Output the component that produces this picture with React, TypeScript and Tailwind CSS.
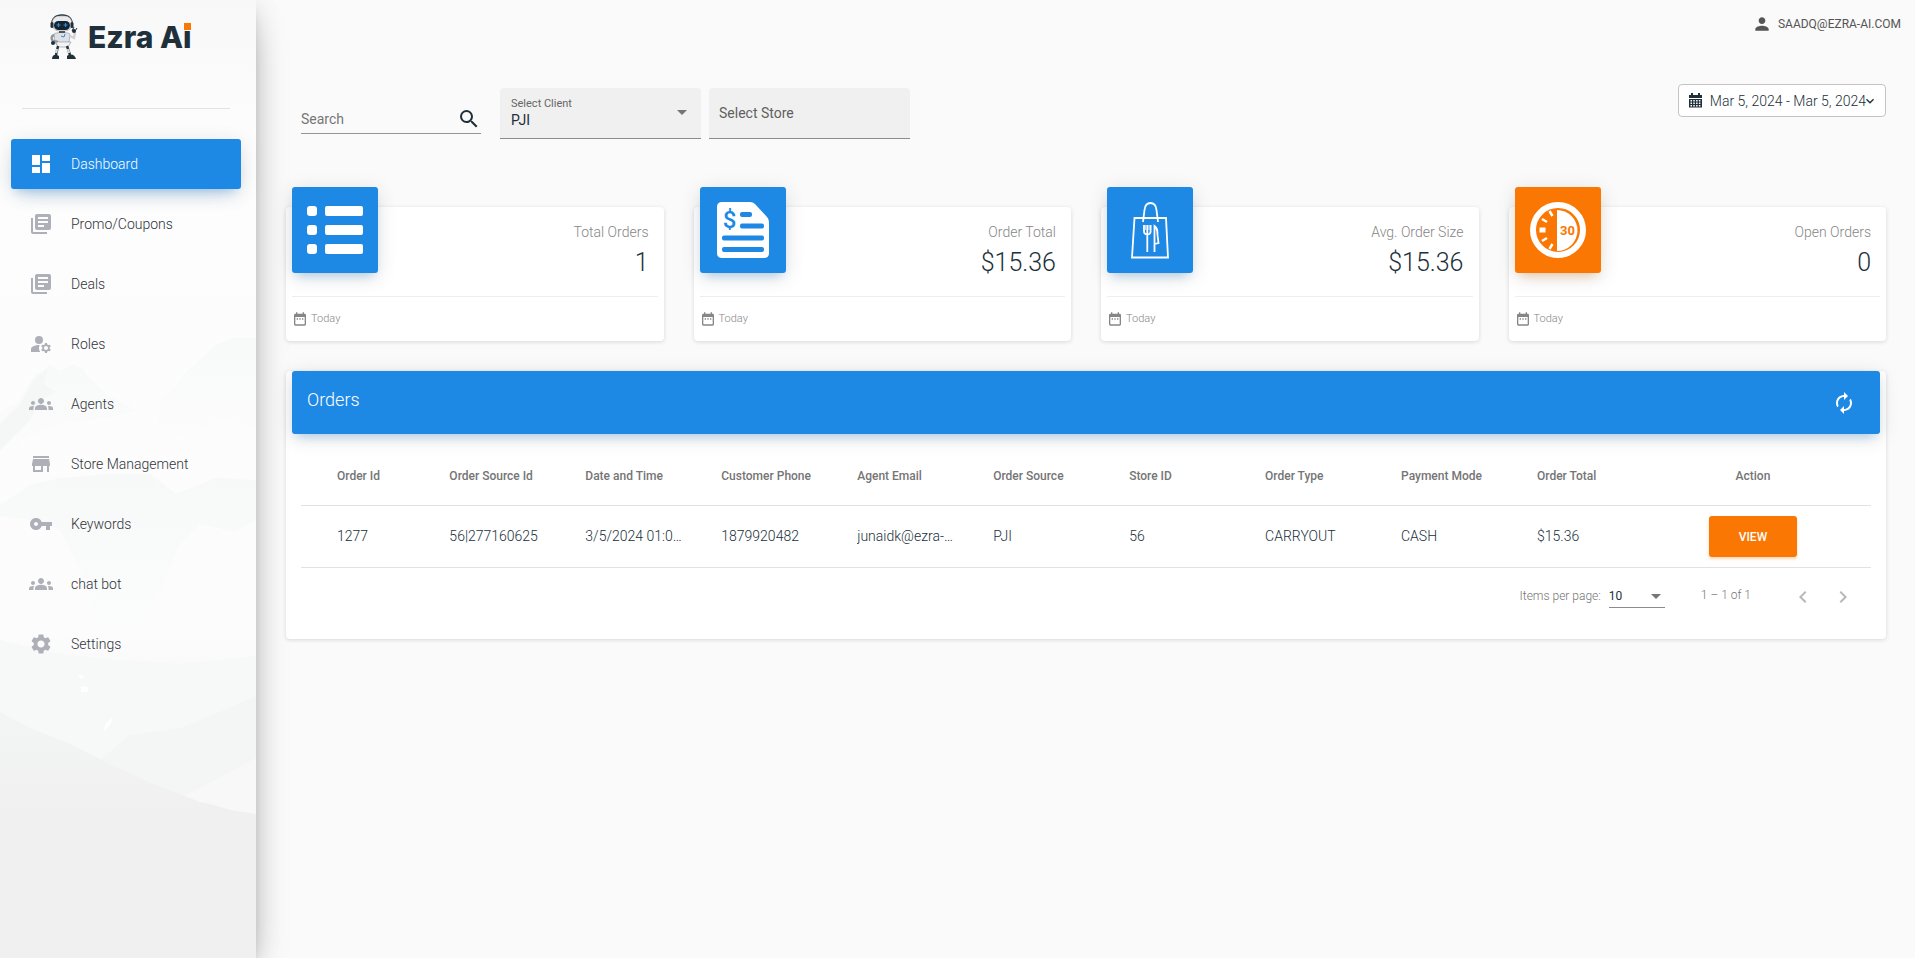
import { useState } from 'react';
import type { ReactNode } from 'react';
import type { IconType } from 'react-icons';
import {
  MdArrowDropDown,
  MdAutorenew,
  MdChevronLeft,
  MdChevronRight,
  MdDashboard,
  MdDateRange,
  MdGroups,
  MdKeyboardArrowDown,
  MdLibraryBooks,
  MdManageAccounts,
  MdPerson,
  MdSearch,
  MdSettings,
  MdStore,
  MdVpnKey,
} from 'react-icons/md';

const navItems: { label: string; icon: IconType; active?: boolean }[] = [
  { label: 'Dashboard', icon: MdDashboard, active: true },
  { label: 'Promo/Coupons', icon: MdLibraryBooks },
  { label: 'Deals', icon: MdLibraryBooks },
  { label: 'Roles', icon: MdManageAccounts },
  { label: 'Agents', icon: MdGroups },
  { label: 'Store Management', icon: MdStore },
  { label: 'Keywords', icon: MdVpnKey },
  { label: 'chat bot', icon: MdGroups },
  { label: 'Settings', icon: MdSettings },
];

const columns = [
  'Order Id',
  'Order Source Id',
  'Date and Time',
  'Customer Phone',
  'Agent Email',
  'Order Source',
  'Store ID',
  'Order Type',
  'Payment Mode',
  'Order Total',
];

const orders = [
  ['1277', '56|277160625', '3/5/2024 01:08 PM', '1879920482', 'junaidk@ezra-ai.com', 'PJI', '56', 'CARRYOUT', 'CASH', '$15.36'],
];

function RobotLogo() {
  return (
    <svg width="28" height="46" viewBox="0 0 28 46" fill="none" aria-hidden="true">
      <path d="M2 12C1 4 6 1 12 1s11 3 10 11" stroke="#20303a" strokeWidth="1.5" />
      <rect x="2" y="2" width="20" height="15" rx="7" fill="#e9eaec" stroke="#8b9197" strokeWidth="0.5" />
      <rect x="4" y="7" width="16" height="9" rx="4.5" fill="#17242d" />
      <rect x="0.5" y="8" width="3" height="6" rx="1.5" fill="#20303a" />
      <rect x="20.5" y="8" width="3" height="6" rx="1.5" fill="#20303a" />
      <path d="M6.5 11h4M8.5 9v4M13.5 11h4M15.5 9v4" stroke="#2b8be8" strokeWidth="1.2" />
      <path d="M4 20c2-2 14-2 16 0l-1 9c-2 4-12 4-14 0z" fill="#dfe1e4" stroke="#8b9197" strokeWidth="0.6" />
      <path d="M9 17h6v2H9z" fill="#4a555d" />
      <path d="M4 21c-3 1-3 4-1 6l5 1" stroke="#8f959b" strokeWidth="2.4" />
      <path d="M20 22l4 2 1-6" stroke="#cfd2d6" strokeWidth="2.4" />
      <path d="M22 17l2-4M25 17l2-3" stroke="#20303a" strokeWidth="1" />
      <circle cx="24" cy="17" r="2" fill="#20303a" />
      <circle cx="3" cy="29" r="2" fill="#20303a" />
      <path d="M11 22l3 1 1-3" stroke="#2b8be8" strokeWidth="1" />
      <path d="M6 28h15l-3 5H8z" fill="#f4f4f5" stroke="#8b9197" strokeWidth="0.6" />
      <path d="M8 32l-2 9M17 32l3 9" stroke="#20303a" strokeWidth="2.4" />
      <path d="M7 35l-1 4M18 35l1 4" stroke="#d8dadd" strokeWidth="2.4" />
      <path d="M2 45c0-3 2-5 5-4l2 1v3zM17 45v-3c4-3 8-1 9 3z" fill="#20303a" />
    </svg>
  );
}

function Mountains() {
  return (
    <svg className="h-full w-full" viewBox="0 0 256 958" preserveAspectRatio="none" aria-hidden="true">
      <defs>
        <linearGradient id="sky" x1="0" y1="0" x2="0" y2="1">
          <stop offset="0" stopColor="#f8f8f8" />
          <stop offset="0.16" stopColor="#fdfdfd" />
          <stop offset="0.66" stopColor="#fcfcfc" />
          <stop offset="0.76" stopColor="#f5f6f6" />
          <stop offset="1" stopColor="#f0f0f0" />
        </linearGradient>
        <linearGradient id="ridge" x1="0" y1="0" x2="0" y2="1">
          <stop offset="0" stopColor="#f8f9f9" />
          <stop offset="1" stopColor="#fcfcfc" />
        </linearGradient>
        <linearGradient id="slope" x1="0" y1="0" x2="0" y2="1">
          <stop offset="0" stopColor="#f7f8f8" />
          <stop offset="1" stopColor="#fbfcfc" />
        </linearGradient>
        <linearGradient id="forest" x1="0" y1="0" x2="0" y2="1">
          <stop offset="0" stopColor="#f3f5f4" />
          <stop offset="0.4" stopColor="#f0f0f0" />
        </linearGradient>
      </defs>
      <rect width="256" height="958" fill="url(#sky)" />
      <path d="M0 412L18 402L26 388L35 375L42 371L50 365L60 371L74 364L84 370L90 379L104 392L120 402L136 410L120 416L60 424L30 436L0 456Z" fill="url(#ridge)" />
      <path d="M20 404L34 380L48 368L44 384L56 392L40 400L30 420L14 436L0 450V424Z" fill="#f5f6f6" />
      <path d="M160 402L174 388L188 370L204 356L215 345L232 338H256V432L240 424L220 420L190 434L160 440L158 424Z" fill="url(#ridge)" />
      <path d="M0 505L30 485L60 478L106 474L150 474L176 494L216 478L256 480V520L236 532L200 524L180 544L160 590L146 620L100 624L80 570L60 530L30 520L0 516Z" fill="url(#slope)" />
      <path d="M0 640L60 654L120 660L180 664L256 656V813H0Z" fill="#f7f8f8" />
      <path d="M100 760L130 735L180 728L220 712L256 696V760L185 796Z" fill="#f4f6f5" />
      <path d="M0 712L30 728L66 742L110 764L150 782L200 802L256 812V958H0Z" fill="url(#forest)" />
      <path d="M185 796L256 758V814L230 810Z" fill="#f8f8f8" />
      <path d="M78 675l7 1-4 3zM81 686l8 1-2 5h-6zM103 732l3-9 7-6-3 8z" fill="#fff" />
    </svg>
  );
}

function ListIcon() {
  return (
    <svg width="86" height="86" viewBox="0 0 86 86" fill="#fff" aria-hidden="true">
      <rect x="15" y="19" width="10" height="10" rx="3" />
      <rect x="33" y="19" width="38" height="10" rx="2" />
      <rect x="15" y="38" width="10" height="10" rx="3" />
      <rect x="33" y="38" width="38" height="10" rx="2" />
      <rect x="15" y="57" width="10" height="10" rx="3" />
      <rect x="33" y="57" width="38" height="10" rx="2" />
    </svg>
  );
}

function InvoiceIcon() {
  return (
    <svg width="86" height="86" viewBox="0 0 86 86" aria-hidden="true">
      <path d="M22 15h28q3 0 5 2l12 13q2 2 2 5v31q0 5-5 5H22q-5 0-5-5V20q0-5 5-5z" fill="#fff" />
      <g fill="#1e88e5">
        <rect x="40" y="25" width="12" height="5" rx="2" />
        <rect x="40" y="36.5" width="24" height="5" rx="2" />
        <rect x="22" y="48.5" width="42" height="5" rx="2" />
        <rect x="22" y="60" width="42" height="5" rx="2" />
        <text x="29.5" y="41" textAnchor="middle" fontFamily="Roboto, sans-serif" fontWeight="500" fontSize="24">$</text>
      </g>
    </svg>
  );
}

function BagIcon() {
  return (
    <svg width="86" height="86" viewBox="0 0 86 86" fill="none" stroke="#fff" strokeWidth="1.8" aria-hidden="true">
      <path d="M27.5 31H59l2 39.5H25z" />
      <path d="M36 35l1.5-12c.5-5 3-7 6-7s5.5 2 6 7L51 35" />
      <path d="M37 38v6c0 2 1 3.5 3.3 3.5s3.3-1.5 3.3-3.5v-6M40.3 38v27" />
      <path d="M38.7 38v5M42 38v5" strokeWidth="0.8" />
      <path d="M47.5 65V39c3 2 3 5 3 9l1 8-4 1" />
    </svg>
  );
}

function TimerIcon() {
  return (
    <svg width="86" height="86" viewBox="0 0 86 86" aria-hidden="true">
      <circle cx="43" cy="43" r="25" fill="none" stroke="#fff" strokeWidth="6" />
      <path d="M42 23a20.5 20.5 0 0 1 0 41z" fill="#fff" />
      <path d="M34.5 24l3 5M27 32l5 3M27 54l5-3M34.5 62l3-5" stroke="#fff" strokeWidth="2.5" />
      <rect x="24.5" y="40.5" width="6" height="5" fill="#fff" />
      <text x="52.5" y="48" textAnchor="middle" fontFamily="Roboto, sans-serif" fontWeight="700" fontSize="13" fill="#fb7704">30</text>
    </svg>
  );
}

function CalendarIcon() {
  return (
    <svg width="13" height="15" viewBox="0 0 13 15" fill="#20303a" aria-hidden="true">
      <path d="M0 2h2V0h2v2h5V0h2v2h2v3H0z" />
      <path fillRule="evenodd" d="M0 6h13v8.5H0zM1.5 7h1.5v1.5H1.5zM4.3 7h1.5v1.5H4.3zM7.1 7h1.5v1.5H7.1zM9.9 7h1.5v1.5H9.9zM1.5 9.5h1.5V11H1.5zM4.3 9.5h1.5V11H4.3zM7.1 9.5h1.5V11H7.1zM9.9 9.5h1.5V11H9.9zM1.5 12h1.5v1.5H1.5zM4.3 12h1.5v1.5H4.3zM7.1 12h1.5v1.5H7.1zM9.9 12h1.5v1.5H9.9z" />
    </svg>
  );
}

function Sidebar() {
  return (
    <aside className="relative w-64 shrink-0 bg-white shadow-[0_16px_38px_-12px_rgba(0,0,0,0.4),0_4px_25px_0_rgba(0,0,0,0.1),0_8px_10px_-5px_rgba(0,0,0,0.18)]">
      <div className="absolute inset-0">
        <Mountains />
      </div>
      <div className="relative">
        <div className="ml-[22px] mr-[26px] flex h-[109px] items-start gap-2.5 border-b border-[#e2e2e2] pl-7 pt-[14px]">
          <RobotLogo />
          <div className="pt-px whitespace-nowrap font-[Inter,sans-serif] text-[30px] font-extrabold leading-[44px] text-[#20303a]">
            Ezra A<span className="relative">i<span className="absolute left-px top-1 h-[7px] w-[7px] bg-[#fb7704]" /></span>
          </div>
        </div>
        <nav className="ml-[11px] mr-[15px] mt-[30px] flex flex-col gap-2.5">
          {navItems.map(({ label, icon: Icon, active }) => (
            <a
              key={label}
              href="#"
              className={
                active
                  ? 'flex h-[50px] items-center gap-[18px] rounded-[3px] bg-[#1e88e5] pl-[18px] text-sm font-light text-white shadow-[0_12px_20px_-10px_rgba(30,136,229,0.28),0_4px_20px_0_rgba(0,0,0,0.12),0_7px_8px_-5px_rgba(30,136,229,0.2)]'
                  : 'flex h-[50px] items-center gap-[18px] rounded-[3px] pl-[18px] text-sm font-light text-[#30343a]'
              }
            >
              <Icon size={24} className={active ? 'text-white' : 'text-[#adb0b8]'} />
              {label}
            </a>
          ))}
        </nav>
      </div>
    </aside>
  );
}

function Filters() {
  const [search, setSearch] = useState('');

  return (
    <div className="flex items-start justify-between pl-[30px]">
      <div className="flex items-start pt-1">
        <div className="mt-4 flex h-[30px] w-[180px] items-center border-b border-[#949494]">
          <input
            type="text"
            aria-label="Search"
            placeholder="Search"
            value={search}
            onChange={(e) => setSearch(e.target.value)}
            className="min-w-0 flex-1 bg-transparent text-sm text-[#20303a] outline-none placeholder:text-[#767676]"
          />
          <button type="button" aria-label="Run search" className="text-[#20303a]">
            <MdSearch size={24} />
          </button>
        </div>
        <div className="relative ml-[19px] h-[51px] w-[201px] rounded-t border-b border-[#8c8c8c] bg-[#f0f0f0]">
          <label htmlFor="client" className="absolute left-[11px] top-2.5 text-[11px] leading-3 text-[#666]">
            Select Client
          </label>
          <select id="client" className="h-full w-full appearance-none bg-transparent pl-[11px] pt-[14px] text-sm text-[#20303a] outline-none">
            <option>PJI</option>
          </select>
          <MdArrowDropDown size={24} className="pointer-events-none absolute right-[7px] top-3 text-[#757575]" />
        </div>
        <div className="ml-2 h-[51px] w-[201px] rounded-t border-b border-[#8c8c8c] bg-[#f0f0f0]">
          <select aria-label="Select Store" className="h-full w-full appearance-none bg-transparent pl-2.5 text-sm text-[#5f5f5f] outline-none">
            <option>Select Store</option>
          </select>
        </div>
      </div>
      <button type="button" className="mr-[15px] flex h-[33px] items-center rounded border border-[#c4c4c4] bg-white pl-2.5 pr-[7px] text-sm font-light text-[#20303a]">
        <CalendarIcon />
        <span className="ml-2">Mar 5, 2024 - Mar 5, 2024</span>
        <MdKeyboardArrowDown size={16} className="-ml-1" />
      </button>
    </div>
  );
}

function StatCard({ label, value, icon, accent }: { label: string; value: string; icon: ReactNode; accent?: boolean }) {
  return (
    <section className="rounded bg-white px-1.5 shadow-[0_1px_4px_0_rgba(0,0,0,0.14)]">
      <div className="flex h-[89px] justify-between">
        <div
          className={
            accent
              ? '-mt-5 h-[86px] w-[86px] rounded-[3px] bg-[#fb7704] shadow-[0_4px_20px_0_rgba(0,0,0,0.12),0_7px_10px_-5px_rgba(251,119,4,0.3)]'
              : '-mt-5 h-[86px] w-[86px] rounded-[3px] bg-[#1e88e5] shadow-[0_4px_20px_0_rgba(0,0,0,0.12),0_7px_10px_-5px_rgba(30,136,229,0.3)]'
          }
        >
          {icon}
        </div>
        <div className="pr-[9px] pt-[15px] text-right font-light">
          <p className="text-sm leading-5 text-[#868686]">{label}</p>
          <p className="text-[25px] leading-[42px] text-[#20303a]">{value}</p>
        </div>
      </div>
      <div className="flex h-[45px] items-center gap-[3px] border-t border-[#eee] text-[11px] font-light text-[#868686]">
        <MdDateRange size={16} />
        Today
      </div>
    </section>
  );
}

function OrdersCard() {
  return (
    <section className="mx-[15px] mt-[50px] rounded bg-white px-1.5 shadow-[0_1px_4px_0_rgba(0,0,0,0.14)]">
      <div className="-mt-5 flex h-[63px] items-start justify-between rounded-[3px] bg-[#1e88e5] px-[15px] text-white shadow-[0_4px_20px_0_rgba(0,0,0,0.12),0_7px_10px_-5px_rgba(30,136,229,0.3)]">
        <h2 className="pt-[15px] text-lg font-light leading-7">Orders</h2>
        <button type="button" aria-label="Refresh orders" className="mr-[9px] mt-5">
          <MdAutorenew size={24} />
        </button>
      </div>
      <div className="px-[9px] pt-[15px]">
        <table className="w-full table-fixed border-separate border-spacing-0 text-left">
          <colgroup>
            <col className="w-[9.45%]" />
            {columns.slice(1).map((col) => (
              <col key={col} className="w-[8.66%]" />
            ))}
            <col />
          </colgroup>
          <thead>
            <tr className="h-[57px] text-xs text-[#757575]">
              {columns.map((col) => (
                <th key={col} scope="col" className="border-b border-[#e2e2e2] pb-0.5 font-medium first:pl-9">
                  {col}
                </th>
              ))}
              <th scope="col" className="border-b border-[#e2e2e2] pb-0.5 pr-[38px] text-center font-medium">Action</th>
            </tr>
          </thead>
          <tbody>
            {orders.map((order) => (
              <tr key={order[0]} className="h-[62px] text-sm font-light text-[#20303a]">
                {order.map((cell, i) => (
                  <td key={columns[i]} className="truncate border-b border-[#e2e2e2] pb-0.5 pr-9 first:pl-9">
                    {cell}
                  </td>
                ))}
                <td className="border-b border-[#e2e2e2] pr-[38px] text-center">
                  <button type="button" className="h-[41px] w-[88px] rounded-[3px] bg-[#fb7704] text-xs font-medium text-white shadow-[0_2px_3px_0_rgba(251,119,4,0.3)]">
                    VIEW
                  </button>
                </td>
              </tr>
            ))}
          </tbody>
        </table>
        <div className="flex h-[71px] items-start justify-end pr-4 pt-2 text-xs font-light text-[#757575]">
          <label htmlFor="page-size" className="mt-2.5 leading-5">
            Items per page:
          </label>
          <div className="relative ml-2 mt-2 h-6 w-14 border-b border-[#8c8c8c]">
            <select id="page-size" className="h-full w-full appearance-none bg-transparent font-normal text-[#20303a] outline-none">
              <option>10</option>
            </select>
            <MdArrowDropDown size={24} className="pointer-events-none absolute -right-[3px] top-0 text-[#757575]" />
          </div>
          <span className="ml-9 mt-[9px] leading-5">1 – 1 of 1</span>
          <div className="ml-10 mt-[9px] flex gap-4 text-[#b8b8b8]">
            <button type="button" aria-label="Previous page">
              <MdChevronLeft size={24} />
            </button>
            <button type="button" aria-label="Next page">
              <MdChevronRight size={24} />
            </button>
          </div>
        </div>
      </div>
    </section>
  );
}

export default function App() {
  return (
    <div className="flex min-h-screen bg-[#fafafa] font-[Roboto,sans-serif]">
      <Sidebar />
      <main className="min-w-0 flex-1 pl-[15px] pr-3.5">
        <header className="flex h-12 items-center justify-end">
          <a href="#" className="flex items-center gap-1.5 text-xs text-[#555]">
            <MdPerson size={20} />
            SAADQ@EZRA-AI.COM
          </a>
        </header>
        <div className="pt-9">
          <Filters />
        </div>
        <div className="mx-[15px] mt-[68px] grid grid-cols-4 gap-[30px]">
          <StatCard label="Total Orders" value="1" icon={<ListIcon />} />
          <StatCard label="Order Total" value="$15.36" icon={<InvoiceIcon />} />
          <StatCard label="Avg. Order Size" value="$15.36" icon={<BagIcon />} />
          <StatCard label="Open Orders" value="0" icon={<TimerIcon />} accent />
        </div>
        <OrdersCard />
      </main>
    </div>
  );
}
